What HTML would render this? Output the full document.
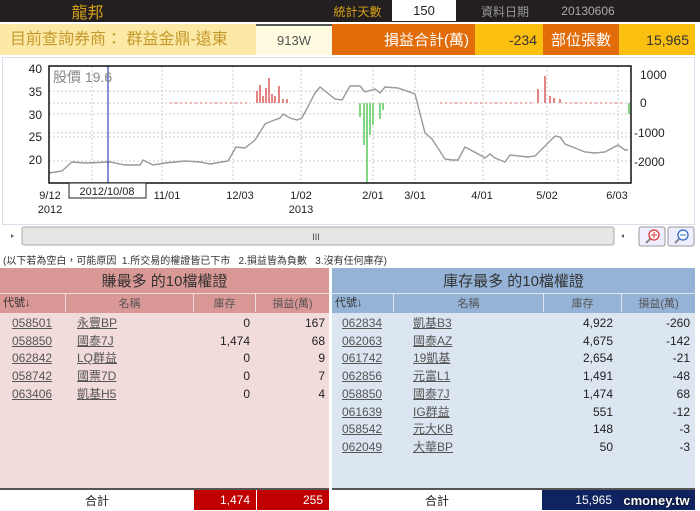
<!DOCTYPE html>
<html><head><meta charset="utf-8"><style>
*{margin:0;padding:0;box-sizing:border-box}
body{width:700px;height:511px;overflow:hidden;background:#fff;font-family:"Liberation Sans","Noto Sans CJK TC",sans-serif;position:relative}
.a{position:absolute}
.c{display:flex;align-items:center;justify-content:center}
.r{display:flex;align-items:center;justify-content:flex-end;padding-right:6px}
.t{font-size:12px;line-height:14px;color:#555;text-decoration:underline}
.n{font-size:12px;line-height:14px;color:#222;text-align:right}
</style></head><body>
<!-- header -->
<div class="a" style="left:0;top:0;width:700px;height:22px;background:#231f20"></div>
<div class="a c" style="left:60px;top:0;width:55px;height:22px;color:#d4a017;font-size:16px">龍邦</div>
<div class="a c" style="left:325px;top:0;width:65px;height:22px;color:#d4a017;font-size:12px">統計天數</div>
<div class="a c" style="left:392px;top:0;width:64px;height:21px;background:#fff;color:#222;font-size:13px">150</div>
<div class="a c" style="left:475px;top:0;width:60px;height:22px;color:#999;font-size:12px">資料日期</div>
<div class="a c" style="left:553px;top:0;width:70px;height:22px;color:#aaa;font-size:12px">20130606</div>
<!-- row2 -->
<div class="a" style="left:0;top:24px;width:256px;height:31px;background:#fde9a6;color:#c59a2c;font-size:16px;line-height:31px;padding-left:10px">目前查詢券商： 群益金鼎-遠東</div>
<div class="a c" style="left:256px;top:24px;width:76px;height:31px;background:#fffbe0;border-top:2px solid #555;color:#555;font-size:13px">913W</div>
<div class="a r" style="left:332px;top:24px;width:143px;height:31px;background:#e36c0a;color:#fff;font-size:15px">損益合計(萬)</div>
<div class="a r" style="left:475px;top:24px;width:68px;height:31px;background:#fbbf10;color:#333;font-size:14px">-234</div>
<div class="a c" style="left:543px;top:24px;width:76px;height:31px;background:#e36c0a;color:#fff;font-size:15px">部位張數</div>
<div class="a r" style="left:619px;top:24px;width:76px;height:31px;background:#fbbf10;color:#333;font-size:14px">15,965</div>
<!-- chart panel -->
<div class="a" style="left:2px;top:57px;width:693px;height:168px;border:1px solid #dde;background:#fff"></div>
<svg class="a" style="left:0;top:0" width="700" height="250">
<g stroke="#ccc" stroke-dasharray="2,2" stroke-width="1">
<line x1="92" y1="66" x2="92" y2="183"/><line x1="162" y1="66" x2="162" y2="183"/><line x1="233" y1="66" x2="233" y2="183"/><line x1="301" y1="66" x2="301" y2="183"/><line x1="373" y1="66" x2="373" y2="183"/><line x1="415" y1="66" x2="415" y2="183"/><line x1="483" y1="66" x2="483" y2="183"/><line x1="547" y1="66" x2="547" y2="183"/><line x1="618" y1="66" x2="618" y2="183"/>
<line x1="49" y1="91" x2="631" y2="91"/><line x1="49" y1="103" x2="631" y2="103"/><line x1="49" y1="114" x2="631" y2="114"/><line x1="49" y1="133" x2="631" y2="133"/><line x1="49" y1="137" x2="631" y2="137"/><line x1="49" y1="161" x2="631" y2="161"/>
</g>
<g stroke="#e06666" stroke-width="1.6">
<line x1="257" y1="103" x2="257" y2="91"/><line x1="260" y1="103" x2="260" y2="85"/><line x1="263" y1="103" x2="263" y2="96"/><line x1="266" y1="103" x2="266" y2="88"/><line x1="269" y1="103" x2="269" y2="78"/><line x1="272" y1="103" x2="272" y2="94"/><line x1="275" y1="103" x2="275" y2="96"/><line x1="279" y1="103" x2="279" y2="86"/><line x1="283" y1="103" x2="283" y2="99"/><line x1="287" y1="103" x2="287" y2="99"/>
<line x1="538" y1="103" x2="538" y2="89"/><line x1="545" y1="103" x2="545" y2="76"/><line x1="550" y1="103" x2="550" y2="96"/><line x1="554" y1="103" x2="554" y2="98"/><line x1="560" y1="103" x2="560" y2="99"/>
</g>
<g stroke="#6c6" stroke-width="1.6">
<line x1="360" y1="103" x2="360" y2="117"/><line x1="364" y1="103" x2="364" y2="145"/><line x1="367" y1="103" x2="367" y2="183"/><line x1="370" y1="103" x2="370" y2="135"/><line x1="373" y1="103" x2="373" y2="125"/><line x1="380" y1="103" x2="380" y2="119"/><line x1="383" y1="103" x2="383" y2="110"/><line x1="629" y1="103" x2="629" y2="114"/>
</g>
<g stroke="#e06666" stroke-width="1" stroke-dasharray="2,3"><line x1="170" y1="103" x2="250" y2="103"/><line x1="440" y1="103" x2="535" y2="103"/><line x1="565" y1="103" x2="625" y2="103"/></g>
<polyline fill="none" stroke="#999" stroke-width="1.4" points="49,173 62,171 72,162 85,163 110,162 125,165 140,165 143,160 153,165 165,163 185,161 200,162 210,164 228,161 236,147 245,148 255,140 265,124 272,121 280,118 283,114 290,118 297,120 302,118 315,93 320,87 325,91 335,99 342,100 350,86 360,86 365,92 375,89 380,93 385,87 398,88 415,94 425,133 432,139 445,159 452,160 458,160 465,147 480,155 485,158 490,154 495,158 500,160 505,162 510,155 528,157 535,156 550,141 555,136 560,137 565,144 575,148 585,152 595,153 605,152 618,145 625,150 628,150"/>
<line x1="108" y1="66" x2="108" y2="183" stroke="#3344bb" stroke-width="1.2"/>
<rect x="49" y="66" width="582" height="117" fill="none" stroke="#111" stroke-width="1.5"/>
<g font-family="Liberation Sans,sans-serif" font-size="12" fill="#222" text-anchor="end">
<text x="42" y="73">40</text><text x="42" y="96">35</text><text x="42" y="119">30</text><text x="42" y="141">25</text><text x="42" y="164">20</text>
</g>
<g font-family="Liberation Sans,sans-serif" font-size="12" fill="#222">
<text x="640" y="79">1000</text><text x="640" y="107">0</text><text x="634" y="137">-1000</text><text x="634" y="166">-2000</text>
</g>
<text x="53" y="82" font-family="Liberation Sans,Noto Sans CJK TC,sans-serif" font-size="14" fill="#888">股價 19.6</text>
<g font-family="Liberation Sans,sans-serif" font-size="11" fill="#222" text-anchor="middle">
<text x="50" y="199">9/12</text><text x="50" y="213">2012</text><text x="167" y="199">11/01</text><text x="240" y="199">12/03</text><text x="301" y="199">1/02</text><text x="301" y="213">2013</text><text x="373" y="199">2/01</text><text x="415" y="199">3/01</text><text x="482" y="199">4/01</text><text x="547" y="199">5/02</text><text x="617" y="199">6/03</text>
</g>
<rect x="69" y="183" width="77" height="15" fill="#fff" stroke="#222"/>
<text x="107" y="195" font-family="Liberation Sans,sans-serif" font-size="11" text-anchor="middle" fill="#222">2012/10/08</text>
<rect x="22" y="227" width="592" height="18" rx="2" fill="#e6e6e6" stroke="#aaa"/>
<text x="316" y="240" font-size="9" fill="#444" text-anchor="middle" font-family="Liberation Sans,sans-serif">III</text>
<path d="M14,236 l-3,-2 v4z M621,236 l3,-2 v4z" fill="#666"/>
<rect x="639" y="227" width="26" height="19" rx="2" fill="#eef" stroke="#999"/>
<rect x="668" y="227" width="26" height="19" rx="2" fill="#eef" stroke="#999"/>
<circle cx="654" cy="235" r="5" fill="#fff" stroke="#d33" stroke-width="1.3"/><path d="M651,235h6M654,232v6" stroke="#d33"/><line x1="650" y1="239" x2="646" y2="243" stroke="#888" stroke-width="2"/>
<circle cx="683" cy="235" r="5" fill="#fff" stroke="#36c" stroke-width="1.3"/><path d="M680,235h6" stroke="#36c"/><line x1="679" y1="239" x2="675" y2="243" stroke="#888" stroke-width="2"/>
</svg>
<div class="a" style="left:3px;top:252px;font-size:10px;color:#333;white-space:nowrap">(以下若為空白，可能原因 &nbsp;1.所交易的權證皆已下市 &nbsp;&nbsp;2.損益皆為負數 &nbsp;&nbsp;3.沒有任何庫存)</div>
<!-- left table -->
<div class="a" style="left:0;top:268px;width:329px;height:220px;background:#f2dcdb"></div>
<div class="a c" style="left:0;top:268px;width:329px;height:25px;background:#d99795;color:#333;font-size:15px">賺最多 的10檔權證</div>
<div class="a" style="left:0;top:293px;width:329px;height:20px;background:#d99795;border-top:1px solid #f2dcdb"></div>
<div class="a" style="left:0;top:294px;font-size:11px;color:#333;padding-left:3px;line-height:18px">代號↓</div>
<div class="a c" style="left:65px;top:294px;width:128px;height:18px;font-size:11px;color:#555;border-left:1px solid #f2dcdb">名稱</div>
<div class="a c" style="left:193px;top:294px;width:62px;height:18px;font-size:11px;color:#555;border-left:1px solid #f2dcdb">庫存</div>
<div class="a c" style="left:255px;top:294px;width:74px;height:18px;font-size:11px;color:#555;border-left:1px solid #f2dcdb">損益(萬)</div>
<!-- right table -->
<div class="a" style="left:332px;top:268px;width:363px;height:220px;background:#dce6f1"></div>
<div class="a c" style="left:332px;top:268px;width:363px;height:25px;background:#95b3d7;color:#333;font-size:15px">庫存最多 的10檔權證</div>
<div class="a" style="left:332px;top:293px;width:363px;height:20px;background:#95b3d7;border-top:1px solid #dce6f1"></div>
<div class="a" style="left:332px;top:294px;font-size:11px;color:#333;padding-left:3px;line-height:18px">代號↓</div>
<div class="a c" style="left:393px;top:294px;width:150px;height:18px;font-size:11px;color:#555;border-left:1px solid #dce6f1">名稱</div>
<div class="a c" style="left:543px;top:294px;width:78px;height:18px;font-size:11px;color:#555;border-left:1px solid #dce6f1">庫存</div>
<div class="a c" style="left:621px;top:294px;width:74px;height:18px;font-size:11px;color:#555;border-left:1px solid #dce6f1">損益(萬)</div>
<!-- rows left -->
<div class="a t" style="left:12px;top:316px">058501</div><div class="a t" style="left:77px;top:316px">永豐BP</div><div class="a n" style="left:200px;top:316px;width:50px">0</div><div class="a n" style="left:270px;top:316px;width:55px">167</div>
<div class="a t" style="left:12px;top:334px">058850</div><div class="a t" style="left:77px;top:334px">國泰7J</div><div class="a n" style="left:200px;top:334px;width:50px">1,474</div><div class="a n" style="left:270px;top:334px;width:55px">68</div>
<div class="a t" style="left:12px;top:351px">062842</div><div class="a t" style="left:77px;top:351px">LQ群益</div><div class="a n" style="left:200px;top:351px;width:50px">0</div><div class="a n" style="left:270px;top:351px;width:55px">9</div>
<div class="a t" style="left:12px;top:369px">058742</div><div class="a t" style="left:77px;top:369px">國票7D</div><div class="a n" style="left:200px;top:369px;width:50px">0</div><div class="a n" style="left:270px;top:369px;width:55px">7</div>
<div class="a t" style="left:12px;top:387px">063406</div><div class="a t" style="left:77px;top:387px">凱基H5</div><div class="a n" style="left:200px;top:387px;width:50px">0</div><div class="a n" style="left:270px;top:387px;width:55px">4</div>
<!-- rows right -->
<div class="a t" style="left:342px;top:316px">062834</div><div class="a t" style="left:413px;top:316px">凱基B3</div><div class="a n" style="left:560px;top:316px;width:53px">4,922</div><div class="a n" style="left:630px;top:316px;width:60px">-260</div>
<div class="a t" style="left:342px;top:334px">062063</div><div class="a t" style="left:413px;top:334px">國泰AZ</div><div class="a n" style="left:560px;top:334px;width:53px">4,675</div><div class="a n" style="left:630px;top:334px;width:60px">-142</div>
<div class="a t" style="left:342px;top:351px">061742</div><div class="a t" style="left:413px;top:351px">19凱基</div><div class="a n" style="left:560px;top:351px;width:53px">2,654</div><div class="a n" style="left:630px;top:351px;width:60px">-21</div>
<div class="a t" style="left:342px;top:369px">062856</div><div class="a t" style="left:413px;top:369px">元富L1</div><div class="a n" style="left:560px;top:369px;width:53px">1,491</div><div class="a n" style="left:630px;top:369px;width:60px">-48</div>
<div class="a t" style="left:342px;top:387px">058850</div><div class="a t" style="left:413px;top:387px">國泰7J</div><div class="a n" style="left:560px;top:387px;width:53px">1,474</div><div class="a n" style="left:630px;top:387px;width:60px">68</div>
<div class="a t" style="left:342px;top:405px">061639</div><div class="a t" style="left:413px;top:405px">IG群益</div><div class="a n" style="left:560px;top:405px;width:53px">551</div><div class="a n" style="left:630px;top:405px;width:60px">-12</div>
<div class="a t" style="left:342px;top:422px">058542</div><div class="a t" style="left:413px;top:422px">元大KB</div><div class="a n" style="left:560px;top:422px;width:53px">148</div><div class="a n" style="left:630px;top:422px;width:60px">-3</div>
<div class="a t" style="left:342px;top:440px">062049</div><div class="a t" style="left:413px;top:440px">大華BP</div><div class="a n" style="left:560px;top:440px;width:53px">50</div><div class="a n" style="left:630px;top:440px;width:60px">-3</div>
<!-- totals -->
<div class="a" style="left:0;top:488px;width:329px;height:2px;background:#555"></div>
<div class="a" style="left:332px;top:488px;width:363px;height:2px;background:#555"></div>
<div class="a c" style="left:0;top:490px;width:194px;height:20px;font-size:12px;color:#222">合計</div>
<div class="a r" style="left:194px;top:490px;width:63px;height:20px;background:#c00000;color:#fff;font-size:12px;border-right:1px solid #fff">1,474</div>
<div class="a r" style="left:257px;top:490px;width:72px;height:20px;background:#c00000;color:#fff;font-size:12px">255</div>
<div class="a c" style="left:332px;top:490px;width:210px;height:20px;font-size:12px;color:#222">合計</div>
<div class="a r" style="left:542px;top:490px;width:76px;height:20px;background:#0f2360;color:#fff;font-size:12px">15,965</div>
<div class="a c" style="left:618px;top:490px;width:77px;height:20px;background:#0f2360;color:#fff;font-size:13px;font-weight:bold;text-shadow:0 0 2px #000">cmoney.tw</div>
</body></html>
